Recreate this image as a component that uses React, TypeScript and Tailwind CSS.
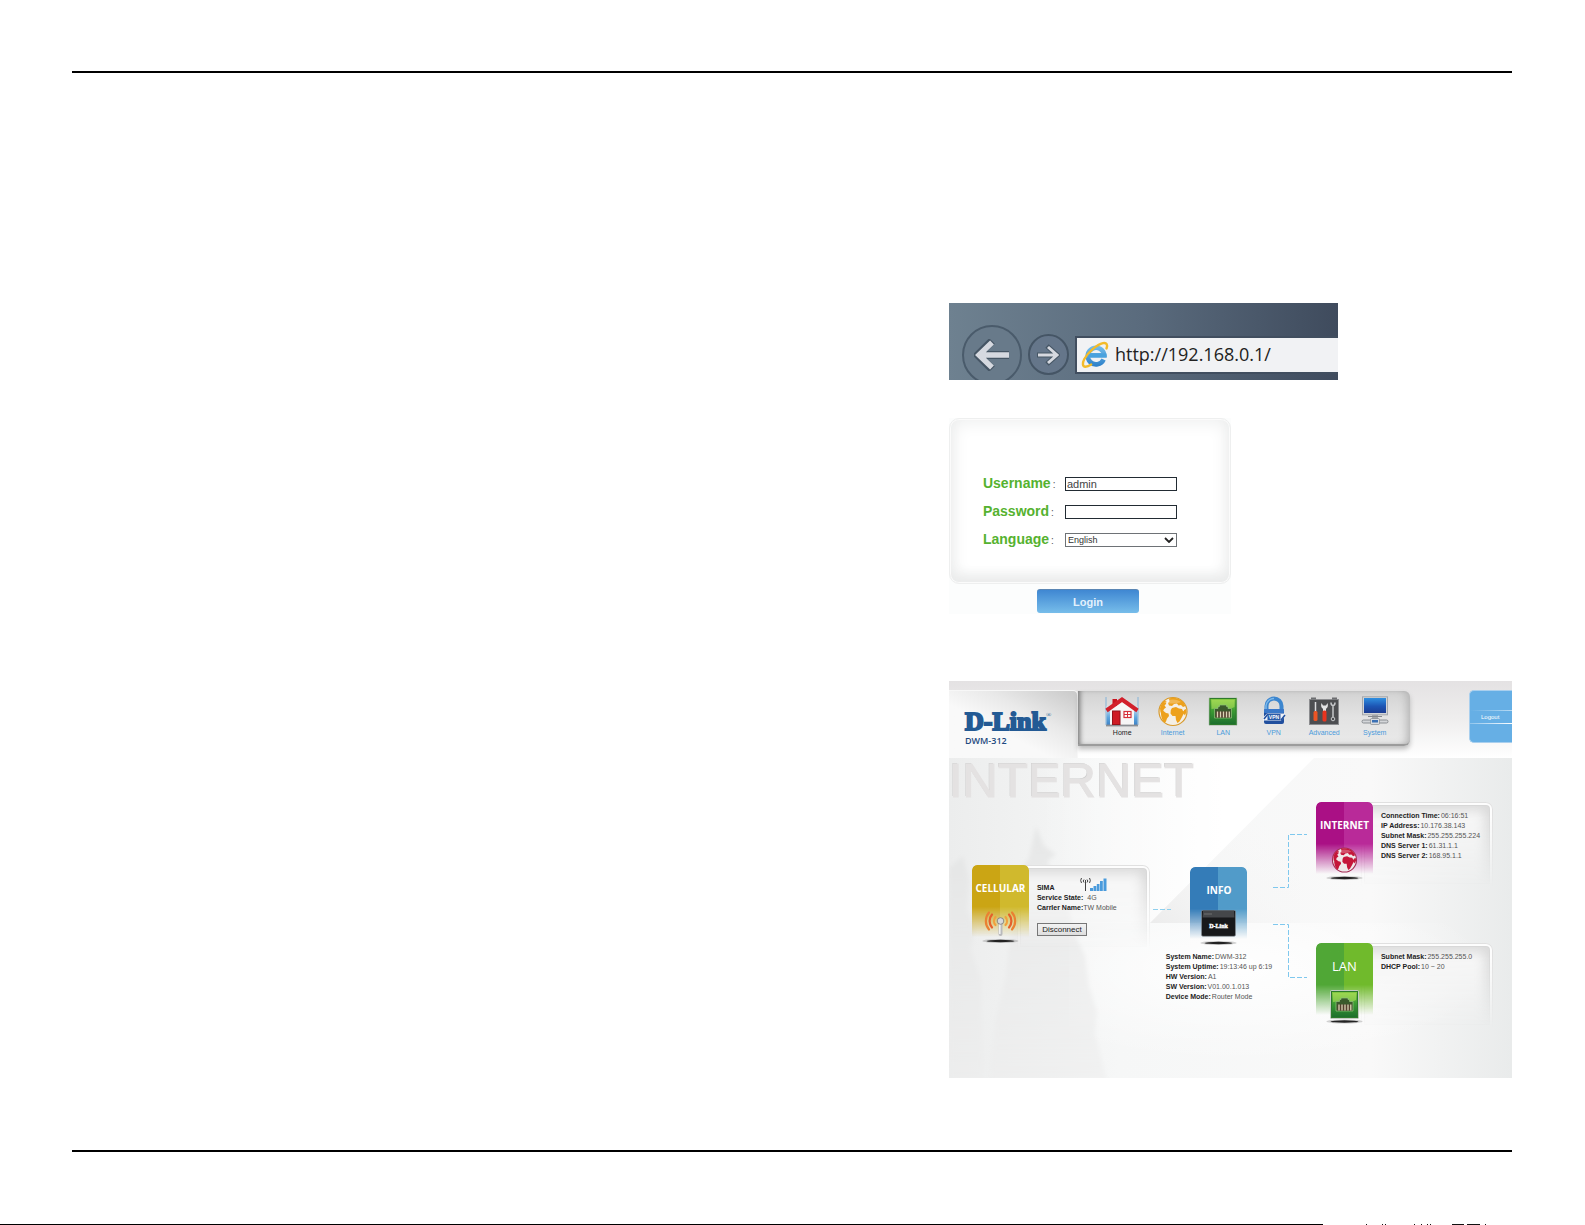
import React from "react";

type InfoLine = {
  label: string;
  value: string;
};

type StatusTileProps = {
  title: string;
  titleClass: string;
  colorClass: string;
  children: React.ReactNode;
};

const internetLines: InfoLine[] = [
  { label: "Connection Time:", value: "06:16:51" },
  { label: "IP Address:", value: "10.176.38.143" },
  { label: "Subnet Mask:", value: "255.255.255.224" },
  { label: "DNS Server 1:", value: "61.31.1.1" },
  { label: "DNS Server 2:", value: "168.95.1.1" },
];

const lanLines: InfoLine[] = [
  { label: "Subnet Mask:", value: "255.255.255.0" },
  { label: "DHCP Pool:", value: "10 ~ 20" },
];

const systemLines: InfoLine[] = [
  { label: "System Name:", value: "DWM-312" },
  { label: "System Uptime:", value: "19:13:46 up 6:19" },
  { label: "HW Version:", value: "A1" },
  { label: "SW Version:", value: "V01.00.1.013" },
  { label: "Device Mode:", value: "Router Mode" },
];

const BrowserIcon = () => (
  <svg viewBox="0 0 28 28" className="size-7 shrink-0" aria-hidden="true">
    <defs>
      <linearGradient id="ieBlue" x1="0" y1="0" x2="0" y2="28" gradientUnits="userSpaceOnUse">
        <stop offset="0" stopColor="#86cdf5" />
        <stop offset="1" stopColor="#2378c4" />
      </linearGradient>
    </defs>
    <path
      d="M22.600 18.500a8.300 8.300 0 1 1 .7-4.300H9"
      fill="none"
      stroke="url(#ieBlue)"
      strokeWidth="4.600"
    />
    <path d="M8 12.500h17.500c.2 1.300.1 2.700-.1 4H8z" fill="#4aa2de" />
    <path
      d="M25.500 7.500C27 3.500 25.600 1.400 22 2.200 16 3.600 6.800 11.200 3.200 18.200c-2 4-1.800 7.400 1.200 7.600 1.800 0 3.800-.8 5.800-2.200"
      fill="none"
      stroke="#f3bb2a"
      strokeWidth="2.400"
      strokeLinecap="round"
    />
  </svg>
);

const HomeIcon = () => (
  <svg viewBox="0 0 34 32" className="h-8 w-[34px]" aria-hidden="true">
    <defs>
      <linearGradient id="homeSky" x1="0" y1="0" x2="0" y2="1">
        <stop offset="0" stopColor="#dfe6ec" />
        <stop offset="0.600" stopColor="#5fa6de" />
        <stop offset="1" stopColor="#3d82c6" />
      </linearGradient>
    </defs>
    <path d="M1 1v28M33 1v28" stroke="#6fa9d8" strokeWidth="0.800" />
    <rect x="1.500" y="10" width="31" height="19" fill="url(#homeSky)" />
    <path d="M5 14 17 4l12 10v15H5z" fill="#f7f6f6" />
    <path d="M1 29.500h32" stroke="#8c8f93" strokeWidth="1.800" />
    <path d="M7.500 3h4.500v7H7.500z" fill="#c8141f" />
    <path d="M1.500 14.500 17 3.500l15.500 11" fill="none" stroke="#d2202b" strokeWidth="4" />
    <rect x="7.500" y="15" width="7.500" height="13.500" fill="#cf1b24" stroke="#96121a" />
    <rect x="19" y="15.500" width="7" height="6" fill="#fff" stroke="#d6303a" strokeWidth="1.200" />
    <path d="M22.500 15.500v6M19 18.500h7" stroke="#d6303a" />
  </svg>
);

type GlobeProps = {
  cx: number;
  cy: number;
  scale: number;
  sea: string;
  land: string;
  rim: string;
};

const Globe = ({ cx, cy, scale, sea, land, rim }: GlobeProps) => (
  <g transform={`translate(${cx} ${cy}) scale(${scale})`}>
    <circle r="14" fill={sea} stroke={rim} strokeWidth="1.200" />
    <path
      d="M-4-13C0-14.500 6-13.500 9.500-10c1.500 1.500 2.500 3 3 4.500L10-4.500 8-6.500 5.500-6 4-8 1-7.500-1-5.500-4-6l-1-2.500 1.500-1.500zM-13-3c.5-3.500 2-6 4.500-8l2 .5-.5 3-1.500 1.500L-7-4l-2 1.500-1 2.500-2.500 1zM-12-.5l2.500 0 2.500 2 2.500.5.5 2.500-2 2.500-1 3-1.500 1.500C-10.500 9-12.500 5-12 -.5zM-1-3.500l4-1 3 1.500 3 .5 1 2 2 .5-2 3.500-1.500 3-2 3.500-2 1.500-1.500-3-.5-4-3 0-2-2.500.3-3.500z"
      fill={land}
    />
    <path d="M-9-9C-5-13 4-13 8-9.500 4-8-5-7-9-9z" fill="#fff" opacity="0.250" />
    <path d="M11-1.500 13-2.500l.5 3-1.500 3.500-1.500-2z" fill={land} />
  </g>
);

const InternetIcon = () => (
  <svg viewBox="0 0 34 32" className="h-8 w-[34px]" aria-hidden="true">
    <Globe cx={17} cy={15.5} scale={1} sea="#f4efe6" land="#eda11c" rim="#d89a2c" />
  </svg>
);

const EthernetPort = () => (
  <>
    <rect x="0.500" y="0.500" width="28" height="28" rx="1" fill="url(#portGreen)" stroke="#c3cbc3" />
    <rect x="1.500" y="1.500" width="26" height="26" fill="none" stroke="#2d7a2b" />
    <path d="M3 3h23v7C18 14 10 10 3 12z" fill="#b5e35e" opacity="0.550" />
    <path d="M6 21v-9.500h3.500v-2H11V8h7v1.500h1.500v2H23V21z" fill="#3b5a2c" stroke="#93c77c" strokeWidth="0.700" />
    <rect x="7.500" y="14.500" width="14" height="6" fill="#55402f" />
    <path d="M9 14.500v6M12 14.500v6M15 14.500v6M18 14.500v6M20.800 14.500v6" stroke="#d9d5b4" strokeWidth="1.300" />
  </>
);

const LanIcon = () => (
  <svg viewBox="0 0 34 32" className="h-8 w-[34px]" aria-hidden="true">
    <defs>
      <linearGradient id="portGreen" x1="0" y1="0" x2="0" y2="1">
        <stop offset="0" stopColor="#8fd044" />
        <stop offset="0.450" stopColor="#3d9d33" />
        <stop offset="1" stopColor="#1a6b2c" />
      </linearGradient>
    </defs>
    <g transform="translate(2.500 1)">
      <EthernetPort />
    </g>
  </svg>
);

const VpnIcon = () => (
  <svg viewBox="0 0 34 32" className="h-8 w-[34px]" aria-hidden="true">
    <path d="M9.500 14V10a7.500 7.500 0 0 1 15 0v4" fill="none" stroke="#3c86cf" strokeWidth="4" />
    <path d="M9 13V9.500a8 8 0 0 1 8-7" fill="none" stroke="#7db9ea" strokeWidth="1.500" />
    <rect x="7" y="13" width="20" height="15" rx="2" fill="#214f9e" />
    <rect x="7" y="13" width="20" height="4" rx="1" fill="#3a78c8" />
    <path d="M6 24.500v-3l4-4h18v3l-4 4z" fill="#eef3fa" />
    <path d="m7 23 4-5M24 24l4-5" stroke="#214f9e" strokeWidth="1.500" />
    <rect x="10.500" y="18" width="13" height="6" fill="#2c5ca8" />
    <text x="17" y="23" textAnchor="middle" fontSize="5" fontWeight="bold" fill="#fff" fontFamily="Liberation Sans, sans-serif">
      VPN
    </text>
  </svg>
);

const AdvancedIcon = () => (
  <svg viewBox="0 0 34 32" className="h-8 w-[34px]" aria-hidden="true">
    <rect x="2.500" y="3.500" width="29" height="25" fill="#4d4e51" stroke="#8b8c8f" />
    <path d="M4 2.500h5M25 2.500h5" stroke="#6d6e71" strokeWidth="2" />
    <path d="M8.500 6v10" stroke="#dadbdc" strokeWidth="1.500" />
    <rect x="6.500" y="15" width="4" height="10" rx="1.500" fill="#ec5525" />
    <path
      d="M14.500 7c-1 3 0 5 1.500 5.800V16h3v-3.200c1.500-.8 2.500-2.800 1.500-5.800l-1.500 2.500h-3z"
      fill="#e3e4e5"
    />
    <rect x="15.500" y="14.500" width="4" height="11" rx="1.500" fill="#e8341f" />
    <path d="M26 10v11M24 6.500c0 2 .6 3 2 3s2-1 2-3" fill="none" stroke="#c5c7c9" strokeWidth="1.500" />
    <circle cx="26" cy="23" r="1.800" fill="none" stroke="#c5c7c9" />
  </svg>
);

const SystemIcon = () => (
  <svg viewBox="0 0 34 32" className="h-8 w-[34px]" aria-hidden="true">
    <defs>
      <linearGradient id="screenBlue" x1="0" y1="0" x2="0" y2="1">
        <stop offset="0" stopColor="#2f8fe0" />
        <stop offset="0.550" stopColor="#1c55b4" />
        <stop offset="1" stopColor="#1b3c92" />
      </linearGradient>
    </defs>
    <rect x="4.500" y="0.800" width="25" height="18" fill="#d3d5d8" stroke="#a5a8ac" />
    <rect x="6" y="2" width="22" height="15" fill="url(#screenBlue)" />
    <path d="M14 19h6v4h-6z" fill="#a3a6aa" />
    <path d="M10 20.500h14" stroke="#85888d" />
    <rect x="4" y="24" width="26" height="3" rx="1.500" fill="#d4d6d9" stroke="#777b80" strokeWidth="0.800" />
    <rect x="12.500" y="22.500" width="9" height="6" rx="1" fill="#d9dbde" stroke="#777b80" strokeWidth="0.600" />
    <rect x="14" y="24" width="6" height="2.500" fill="#3b70b4" />
  </svg>
);

const navItems = [
  { name: "Home", icon: <HomeIcon />, active: true },
  { name: "Internet", icon: <InternetIcon />, active: false },
  { name: "LAN", icon: <LanIcon />, active: false },
  { name: "VPN", icon: <VpnIcon />, active: false },
  { name: "Advanced", icon: <AdvancedIcon />, active: false },
  { name: "System", icon: <SystemIcon />, active: false },
];

const TileShadow = ({ y }: { y: number }) => (
  <>
    <ellipse cx="28.500" cy={y} rx="18" ry="2" fill="#555" opacity="0.250" />
    <ellipse cx="28.500" cy={y} rx="14" ry="1.200" fill="#222" />
  </>
);

const StatusTile = ({ title, titleClass, colorClass, children }: StatusTileProps) => {
  return (
    <div className="relative z-10 flex w-[57px] shrink-0 flex-col items-center">
      <div
        className={`absolute inset-x-0 top-0 h-[72px] rounded-t-[5px] ${colorClass} [mask-image:linear-gradient(to_bottom,black_58%,transparent)]`}
      />
      <h3
        className={`relative flex h-[43px] items-center pt-1 font-['Open_Sans',sans-serif] text-white ${titleClass}`}
      >
        {title}
      </h3>
      <svg viewBox="0 0 57 38" className="relative h-[38px] w-[57px]" aria-hidden="true">
        {children}
      </svg>
    </div>
  );
};

// Bevelled panel that fades out towards the bottom
const StatusPanel = ({ children }: { children: React.ReactNode }) => {
  return (
    <div className="relative grow">
      <div className="absolute -bottom-1 top-0 -left-3 right-0 rounded-tr-[7px] bg-[#f6f6f6] [mask-image:linear-gradient(to_bottom,black_15%,transparent)] shadow-[inset_0_0_0_1px_#e0e0e0,inset_0_0_0_3px_#fdfdfd,inset_0_0_0_4px_#d8d8d8,inset_-6px_6px_12px_2px_#d9d9d9]" />
      <div className="relative pl-2">{children}</div>
    </div>
  );
};

const InfoList = ({ lines }: { lines: InfoLine[] }) => {
  return (
    <dl className="text-[7px] leading-[10px] text-[#555] whitespace-nowrap">
      {lines.map((line) => (
        <div className="flex gap-px" key={line.label}>
          <dt className="font-bold text-[#222]">{line.label}</dt>
          <dd>{line.value}</dd>
        </div>
      ))}
    </dl>
  );
};

const AddressBar = () => {
  return (
    <div className="flex h-[77px] w-[389px] max-w-full items-center gap-[6px] overflow-hidden bg-linear-to-r from-[#6e8190] via-[#5a6b7d] to-[#3f4b5d] pt-[26px] pl-[13px]">
      <button
        type="button"
        aria-label="Back"
        className="flex size-[60px] shrink-0 items-center justify-center rounded-full border-2 border-[#4a5b6b] bg-[#687a8a]"
      >
        <svg viewBox="0 0 36 32" className="h-8 w-9" aria-hidden="true">
          <path d="M18 2 4 16l14 14M5 16h30" fill="none" stroke="#465665" strokeWidth="8" />
          <path d="M18 3.500 5 16l13 12.500M6 16h29" fill="none" stroke="#d6d9e0" strokeWidth="5.500" />
        </svg>
      </button>
      <button
        type="button"
        aria-label="Forward"
        className="flex size-[41px] shrink-0 items-center justify-center rounded-full border-2 border-[#455565] bg-[#65768a]"
      >
        <svg viewBox="0 0 24 22" className="h-[22px] w-6" aria-hidden="true">
          <path d="m11 2 10 9-10 9M1 11h19" fill="none" stroke="#465665" strokeWidth="5" />
          <path d="m12 3 9 8-9 8M2 11h18" fill="none" stroke="#d6d9e0" strokeWidth="3" />
        </svg>
      </button>
      <div className="flex h-[38px] min-w-0 grow items-center gap-[6px] border-y-2 border-l-2 border-[#414e5f] bg-[#f1f2f4] pl-1">
        <BrowserIcon />
        <input
          type="text"
          aria-label="Address"
          defaultValue="http://192.168.0.1/"
          className="w-full min-w-0 bg-transparent font-['Open_Sans',sans-serif] text-[18px] text-[#222] outline-none"
        />
      </div>
    </div>
  );
};

const LoginForm = () => {
  return (
    <form className="mt-[38px] w-[282px] max-w-full bg-[#fcfdfd] pb-[1px]" onSubmit={(e) => e.preventDefault()}>
      <div className="flex h-[166px] flex-col gap-2 rounded-[10px] border border-[#eeefef] bg-white pt-[55px] pl-[33px] shadow-[inset_0_0_0_1px_#fbfbfb,inset_0_-8px_14px_-2px_#e9eaea,inset_0_0_16px_5px_#f0f1f1]">
        <div className="flex h-5 items-center">
          <label htmlFor="username" className="w-[82px] text-[14px] leading-5 font-bold text-[#55b22f]">
            Username<span className="pl-[2px] text-[10px] font-normal text-[#555]">:</span>
          </label>
          <input
            id="username"
            type="text"
            defaultValue="admin"
            className="h-[14px] w-[112px] border border-[#222b33] bg-white pl-px text-[11px] leading-3 text-[#444]"
          />
        </div>
        <div className="flex h-5 items-center">
          <label htmlFor="password" className="w-[82px] text-[14px] leading-5 font-bold text-[#55b22f]">
            Password<span className="pl-[2px] text-[10px] font-normal text-[#555]">:</span>
          </label>
          <input
            id="password"
            type="password"
            className="h-[14px] w-[112px] border border-[#222b33] bg-white text-[11px] leading-3"
          />
        </div>
        <div className="flex h-5 items-center">
          <label htmlFor="language" className="w-[82px] text-[14px] leading-5 font-bold text-[#55b22f]">
            Language<span className="pl-[2px] text-[10px] font-normal text-[#555]">:</span>
          </label>
          <div className="relative flex w-[112px]">
            <select
              id="language"
              className="h-[14px] w-full appearance-none border border-[#6e7276] bg-white pl-[2px] text-[9px] leading-3 text-[#333]"
            >
              <option>English</option>
            </select>
            <svg
              viewBox="0 0 10 6"
              className="pointer-events-none absolute top-1 right-[3px] h-[6px] w-[10px]"
              aria-hidden="true"
            >
              <path d="m1 1 4 4 4-4" fill="none" stroke="#222" strokeWidth="1.800" />
            </svg>
          </div>
        </div>
      </div>
      <div className="flex justify-center pt-[5px] pr-1">
        <button
          type="submit"
          className="h-6 w-[102px] rounded-[3px] border-t border-[#5a86b4] bg-linear-to-b from-[#3f87d2] to-[#77bdea] text-[11px] leading-[22px] font-bold text-[#e3f1fc]"
        >
          Login
        </button>
      </div>
    </form>
  );
};

const DashboardHeader = () => {
  return (
    <header className="relative flex h-[77px] items-start bg-linear-to-b from-[#e4e2e3] via-[#efeeee] to-white pt-[9px]">
      <div className="h-full w-[129px] shrink-0 rounded-tr-[5px] border-t border-r border-[#f7f7f7] bg-linear-to-bl from-[#c9c9c9] via-[#e9e9e9] via-35% to-[#f9f9f9] to-60% pt-[18px] pl-4">
        <div className="flex h-[26px] items-start font-['Liberation_Serif',serif] text-[26px] leading-[26px] font-bold text-[#235a94] [-webkit-text-stroke:2px_#235a94]">
          D-Link
          <span className="text-[7px] leading-[12px] font-normal [-webkit-text-stroke:0px]">®</span>
        </div>
        <div className="font-['Open_Sans',sans-serif] text-[9px] leading-3 font-semibold text-[#1f4a80]">
          DWM-312
        </div>
      </div>
      <nav className="mt-px grid h-[55px] w-[332px] shrink-0 grid-cols-6 rounded-r-[6px] border-b-2 border-[#9c9c9c] bg-linear-to-b from-[#d3d3d3] via-[#e3e3e3] to-[#e9e9e9] pt-[5px] pr-[10px] pl-[19px] shadow-[inset_5px_0_5px_-3px_#777,inset_-6px_0_8px_-3px_#b4b4b4,0_3px_5px_#bbb]">
        {navItems.map((item) => (
          <a
            href="#"
            key={item.name}
            className={`flex flex-col items-center text-[7px] leading-[10px] ${
              item.active ? "text-[#222]" : "text-[#4a9bdc]"
            }`}
          >
            {item.icon}
            {item.name}
          </a>
        ))}
      </nav>
      <div className="ml-auto flex h-[53px] w-[43px] flex-col rounded-l-[5px] border border-r-0 border-[#a9cfee] bg-[#66afe5] pt-[19px]">
        <div className="h-px bg-linear-to-r from-transparent to-[#b8daf3]" />
        <a href="#" className="pl-[11px] text-[6px] leading-3 text-white">
          Logout
        </a>
        <div className="h-px bg-linear-to-r from-[#8fc5ec] to-white" />
      </div>
    </header>
  );
};

const Backdrop = () => (
  <svg
    viewBox="0 0 563 320"
    preserveAspectRatio="none"
    className="absolute inset-0 size-full"
    aria-hidden="true"
  >
    <defs>
      <linearGradient id="wallBase" x1="0" y1="0" x2="1" y2="0">
        <stop offset="0" stopColor="#eceded" />
        <stop offset="0.300" stopColor="#f6f7f7" />
        <stop offset="0.750" stopColor="#f9f9f9" />
        <stop offset="1" stopColor="#e9ebeb" />
      </linearGradient>
      <linearGradient id="wallLight" x1="0.100" y1="0" x2="0.700" y2="0">
        <stop offset="0" stopColor="#fff" stopOpacity="0" />
        <stop offset="1" stopColor="#fff" />
      </linearGradient>
      <linearGradient id="wallShade" x1="0" y1="1" x2="0.600" y2="0.300">
        <stop offset="0" stopColor="#ececec" />
        <stop offset="0.500" stopColor="#f5f5f5" stopOpacity="0.600" />
        <stop offset="1" stopColor="#f7f7f7" stopOpacity="0" />
      </linearGradient>
      <radialGradient id="floor" cx="0.400" cy="0.300" r="0.600">
        <stop offset="0" stopColor="#fff" stopOpacity="0.900" />
        <stop offset="1" stopColor="#fff" stopOpacity="0" />
      </radialGradient>
      <linearGradient id="tree" x1="0" y1="0" x2="0" y2="1">
        <stop offset="0" stopColor="#e4e5e5" stopOpacity="0.800" />
        <stop offset="1" stopColor="#ededed" stopOpacity="0.500" />
      </linearGradient>
      <filter id="haze">
        <feGaussianBlur stdDeviation="2" />
      </filter>
    </defs>
    <rect width="563" height="320" fill="url(#wallBase)" />
    <path d="M60 0h305L201 165H60z" fill="url(#wallLight)" />
    <path d="M365 0 201 165h150V0z" fill="url(#wallShade)" />
    <path d="M120 165h420v155H120z" fill="url(#floor)" />
    <g filter="url(#haze)" fill="url(#tree)">
      <path d="m87 68 8 20 12 8-9 8 10 18-8 10 20 20 4 20 12 26 4 30 8 26-2 22 12 46H40l6-60 10-40 6-50 4-30 8-12-6-14 12-16z" />
      <path d="m14 98 6 24-2 30 8 20-4 20 10 30 2 100H0V110z" />
    </g>
  </svg>
);

const Dashboard = () => {
  return (
    <section className="mt-[67px] overflow-hidden bg-[#f8f8f8]">
      <DashboardHeader />
      <div className="relative h-[320px]">
        <Backdrop />
        <h2 className="relative text-[49px] leading-[44px] text-[#e4e2e2] [-webkit-text-stroke:1px_#e4e2e2] [text-shadow:-1px_-1px_0_#cfcfcf]">
          INTERNET
        </h2>
        <div className="relative flex items-start pl-[23px]">
          <div className="mt-[63px] flex w-[178px] shrink-0">
            <StatusTile
              title="CELLULAR"
              titleClass="text-[10px] font-bold"
              colorClass="bg-linear-to-r from-[#cba514] from-50% to-[#d0b92d] to-50%"
            >
              <g fill="none" strokeWidth="2.200" strokeLinecap="round">
                <path d="M23.500 9a6 6 0 0 0 0 8M33.500 9a6 6 0 0 1 0 8" stroke="#f1a03c" />
                <path d="M20 6.500a10 10 0 0 0 0 13M37 6.500a10 10 0 0 1 0 13" stroke="#e5602c" />
                <path d="M17 4.500a13 13 0 0 0 0 17M40 4.500a13 13 0 0 1 0 17" stroke="#ea8132" />
              </g>
              <path d="M28.500 15v11" stroke="#b9babd" strokeWidth="4" strokeLinecap="round" />
              <path d="M27.800 16v10" stroke="#f4f4f4" strokeWidth="1.500" />
              <circle cx="28.500" cy="13" r="3.300" fill="#d7d8da" stroke="#777" strokeWidth="0.800" />
              <TileShadow y={33} />
            </StatusTile>
            <StatusPanel>
              <div className="flex flex-col items-start pt-[18px] text-[7px] leading-[10px] whitespace-nowrap text-[#555]">
                <div className="flex h-[10px] items-end font-bold text-[#222]">
                  <span className="w-[42px]">SIMA</span>
                  <svg viewBox="0 0 28 16" className="h-4 w-7" aria-hidden="true">
                    <path
                      d="M6.500 3v11M5 2.500a2 2 0 0 0 0 3M8 2.500a2 2 0 0 1 0 3M2.500 1a4.500 4.500 0 0 0 0 5M10.500 1a4.500 4.500 0 0 1 0 5"
                      fill="none"
                      stroke="#444"
                    />
                    <path
                      d="M11 11h3v3h-3zM14.500 9h2.800v5h-2.800zM17.800 7h2.700v7h-2.700zM21 4h2.800v10H21zM24.500 1.500H27.500V14h-3z"
                      fill="#4a9bdc"
                    />
                  </svg>
                </div>
                <p>
                  <b className="text-[#222]">Service State:</b>
                  <span className="pl-1">4G</span>
                </p>
                <p>
                  <b className="text-[#222]">CarrIer Name:</b>
                  <span>TW Mobile</span>
                </p>
                <button
                  type="button"
                  className="mt-[10px] h-[13px] w-[50px] border border-[#777] bg-linear-to-b from-[#f3f3f3] to-[#dedede] text-[8px] leading-[10px] text-[#222]"
                >
                  Disconnect
                </button>
              </div>
            </StatusPanel>
          </div>
          <svg viewBox="0 0 17 2" className="mt-[106px] h-[2px] w-[17px] shrink-0 overflow-visible" aria-hidden="true">
            <path d="M3 1.500h18" stroke="#8fd0ee" strokeDasharray="5 2" />
          </svg>
          <div className="mt-[65px] flex w-[104px] shrink-0 flex-col items-center">
            <StatusTile
              title="INFO"
              titleClass="text-[10px] font-bold"
              colorClass="bg-linear-to-r from-[#347cb8] from-50% to-[#519bc9] to-50%"
            >
              <rect x="11.500" y="0.300" width="34" height="26" rx="1.500" fill="#18191b" stroke="#8a9299" strokeWidth="0.600" />
              <path d="M13 1h31l0.500 6.500h-32z" fill="#45474a" />
              <path d="M14.500 4h8" stroke="#999" strokeDasharray="1 1" />
              <text
                x="28.500"
                y="17.500"
                textAnchor="middle"
                fontSize="6"
                fontWeight="bold"
                fill="#fff"
                fontFamily="Liberation Serif, serif"
                stroke="#fff"
                strokeWidth="0.400"
              >
                D-Link
              </text>
              <TileShadow y={33} />
            </StatusTile>
            <div className="mt-[4px]">
              <InfoList lines={systemLines} />
            </div>
          </div>
          <svg viewBox="0 0 45 230" className="h-[230px] w-[45px] shrink-0" aria-hidden="true">
            <path
              d="M2 85.500h15.500V32.500H36M2 122.500h15.500V175.500H36"
              fill="none"
              stroke="#7fc8ee"
              strokeDasharray="5 2"
            />
          </svg>
          <div className="flex w-[177px] shrink-0 flex-col gap-[60px]">
            <div className="flex">
              <StatusTile
                title="INTERNET"
                titleClass="text-[10px] font-bold"
                colorClass="bg-linear-to-r from-[#aa1085] from-50% to-[#b92a99] to-50%"
              >
                <Globe cx={28.5} cy={15} scale={0.86} sea="#efe9ea" land="#c5163a" rim="#a32b52" />
                <TileShadow y={33} />
              </StatusTile>
              <StatusPanel>
                <div className="pt-[9px]">
                  <InfoList lines={internetLines} />
                </div>
              </StatusPanel>
            </div>
            <div className="flex">
              <StatusTile
                title="LAN"
                titleClass="text-[13px]"
                colorClass="bg-linear-to-r from-[#50a736] from-50% to-[#70ba2c] to-50%"
              >
                <g transform="translate(14 4)">
                  <EthernetPort />
                </g>
                <TileShadow y={35.5} />
              </StatusTile>
              <StatusPanel>
                <div className="pt-[9px]">
                  <InfoList lines={lanLines} />
                </div>
              </StatusPanel>
            </div>
          </div>
        </div>
      </div>
    </section>
  );
};

const App = () => {
  return (
    <div className="bg-white pt-[71px] font-['Liberation_Sans',Arial,sans-serif]">
      <main className="mr-[73px] ml-[72px] grid grid-cols-[609fr_391fr] border-y-2 border-black pt-[230px] pb-[72px]">
        <div className="col-start-2 min-w-0">
          <AddressBar />
          <LoginForm />
          <Dashboard />
        </div>
      </main>
      <footer className="flex pt-[72px]">
        <div className="h-px w-[1323px] bg-black" />
        <svg viewBox="0 0 262 1" className="h-px w-[262px]" aria-hidden="true">
          <path
            d="M43 .5h1M59 .5h1M62 .5h1M91 .5h1M98 .5h1M104 .5h1M107 .5h1M129 .5h12M144 .5h13M162 .5h1"
            stroke="#111"
          />
        </svg>
      </footer>
    </div>
  );
};

export default App;
